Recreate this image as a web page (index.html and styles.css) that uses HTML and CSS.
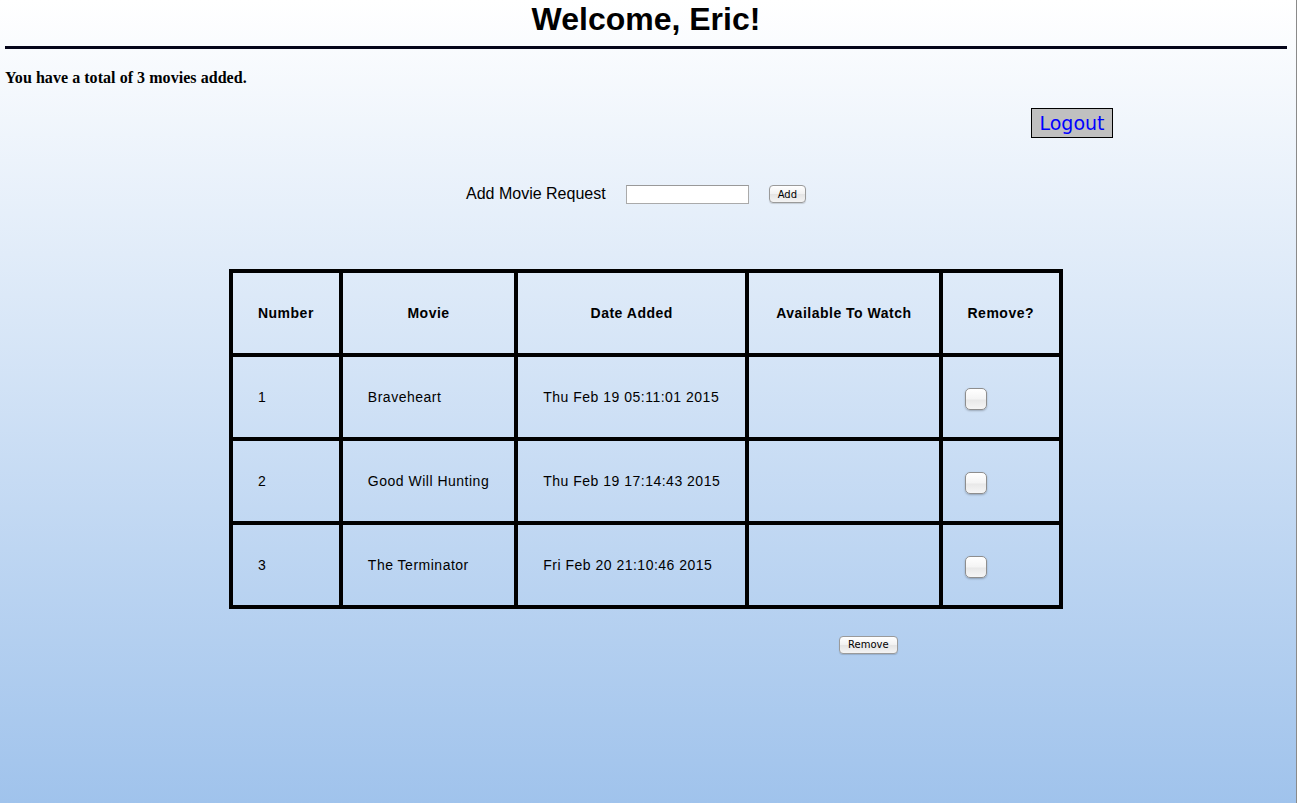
FILE: index.html
```html
<!DOCTYPE html>
<html>
<head>
<meta charset="utf-8">
<link rel="stylesheet" href="styles.css">
</head>
<body>
<div class="page">
  <h1 class="title">Welcome, Eric!</h1>
  <hr class="rule">
  <p class="total">You have a total of 3 movies added.</p>
  <div class="logout-row"><button class="logout">Logout</button></div>
  <form class="add-row">
    <label class="add-label">Add Movie Request</label>
    <input class="add-input" type="text">
    <button type="button" class="mac-btn">Add</button>
  </form>
  <table class="movies">
    <thead>
      <tr><th>Number</th><th>Movie</th><th>Date Added</th><th class="avail">Available To Watch</th><th>Remove?</th></tr>
    </thead>
    <tbody>
      <tr><td>1</td><td>Braveheart</td><td>Thu Feb 19 05:11:01 2015</td><td class="avail"></td><td><input class="check" type="checkbox"></td></tr>
      <tr><td>2</td><td>Good Will Hunting</td><td>Thu Feb 19 17:14:43 2015</td><td class="avail"></td><td><input class="check" type="checkbox"></td></tr>
      <tr><td>3</td><td>The Terminator</td><td>Fri Feb 20 21:10:46 2015</td><td class="avail"></td><td><input class="check" type="checkbox"></td></tr>
    </tbody>
  </table>
  <div class="remove-row"><button type="button" class="mac-btn">Remove</button></div>
</div>
</body>
</html>
```

FILE: styles.css
```css
html, body {
  margin: 0;
  height: 100%;
}
body {
  background: linear-gradient(to bottom, #ffffff 0px, #a0c3ec 803px);
  background-repeat: no-repeat;
  min-height: 803px;
  font-family: "Liberation Sans", Arial, sans-serif;
  color: #000;
  border-right: 1px solid #8a8a8a;
  box-sizing: border-box;
}
.page {
  padding: 0 9px 0 5px;
}
.title {
  margin: 0;
  padding-top: 1px;
  font-size: 32px;
  font-weight: bold;
  text-align: center;
  line-height: 37px;
}
.rule {
  margin: 8px 0 0 0;
  border: none;
  height: 3px;
  background: #05051a;
}
.total {
  margin: 20px 0 0 0;
  font-family: "Liberation Serif", "Times New Roman", serif;
  font-weight: bold;
  font-size: 16px;
  line-height: 18px;
  letter-spacing: 0.05px;
}
.logout-row {
  display: flex;
  justify-content: flex-end;
  padding-right: 174px;
  margin-top: 21px;
}
.logout {
  font-family: "DejaVu Sans", sans-serif;
  font-size: 19px;
  color: #0000ff;
  background: #c0c0c0;
  border: 1px solid #000;
  padding: 0 6px;
  height: 30px;
  width: 82px;
  line-height: 26px;
  margin: 0;
}
.add-row {
  display: flex;
  justify-content: center;
  align-items: center;
  margin: 46px 0 0 0;
  padding-right: 20px;
  height: 20px;
}
.add-label {
  font-size: 16px;
  margin-right: 20px;
}
.add-input {
  width: 123px;
  height: 19px;
  box-sizing: border-box;
  border: 1px solid #aaa;
  border-top-color: #999;
  background: #fff;
  margin: 0 20px 0 0;
  padding: 0;
}
.mac-btn {
  font-family: "DejaVu Sans", sans-serif;
  font-size: 10px;
  height: 18px;
  padding: 0 8px;
  margin: 0;
  border: 1px solid #9a9a9a;
  border-radius: 4px;
  background: linear-gradient(to bottom, #ffffff, #f1f1f1 50%, #e4e4e4 51%, #f4f4f4);
  color: #000;
  box-shadow: 0 1px 1px rgba(0,0,0,0.15);
}
.movies {
  margin: 65px auto 0 auto;
  border-collapse: collapse;
  border: 4px solid #000;
}
.movies th, .movies td {
  border: 4px solid #000;
  padding: 0 25px;
  height: 84px;
  font-size: 14px;
  letter-spacing: 0.5px;
  box-sizing: border-box;
}
.movies .avail {
  padding: 0 27px;
}
.movies th {
  font-weight: bold;
  text-align: center;
}
.movies td {
  text-align: left;
}
.check {
  appearance: none;
  -webkit-appearance: none;
  width: 22px;
  height: 22px;
  margin: 4px 0 0 -3px;
  border: 1px solid #8e8e8e;
  border-radius: 5px;
  background: linear-gradient(to bottom, #ffffff 0%, #f4f4f4 50%, #e8e8e8 55%, #f6f6f6 100%);
  box-shadow: 0 1px 2px rgba(0,0,0,0.25);
  display: block;
}
.remove-row {
  margin-top: 25px;
  padding-left: 834px;
}
```
